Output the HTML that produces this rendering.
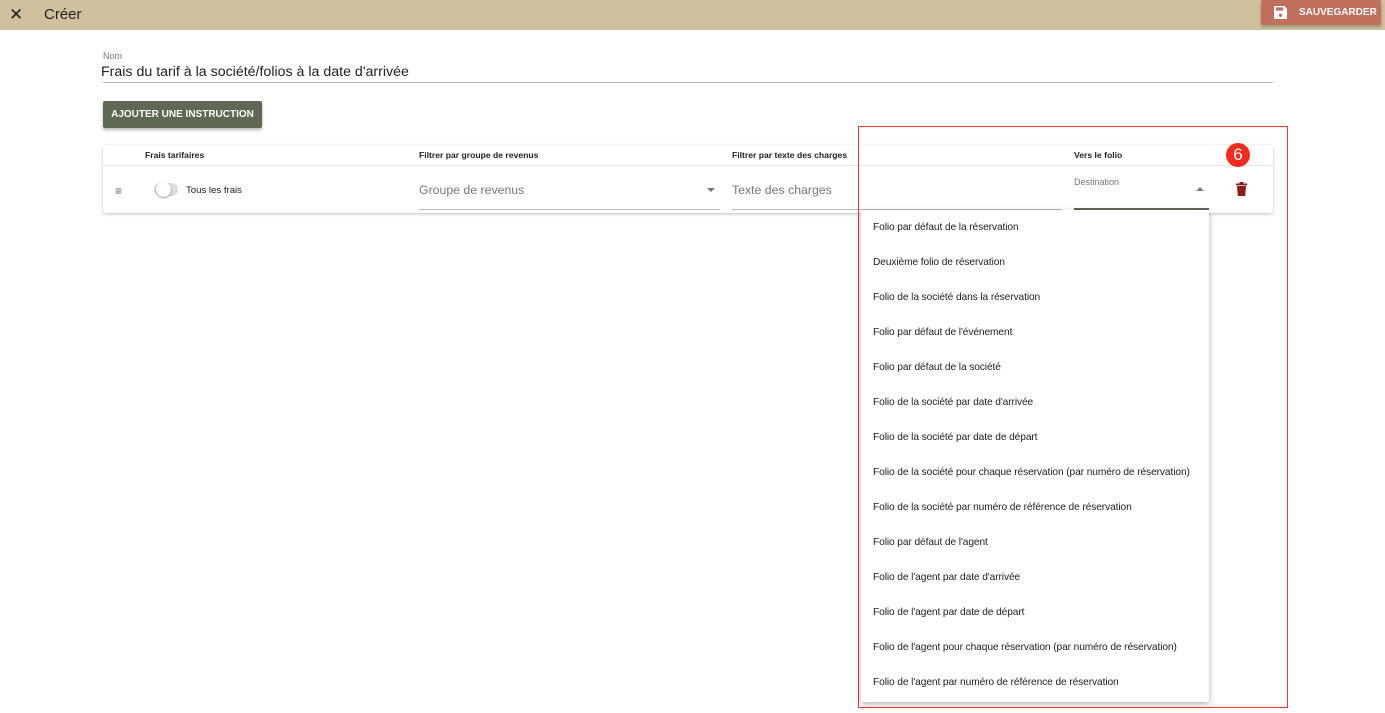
<!DOCTYPE html>
<html><head><meta charset="utf-8"><style>
*{box-sizing:border-box;margin:0;padding:0}
body{width:1385px;height:713px;background:#fff;font-family:"Liberation Sans",sans-serif;position:relative;overflow:hidden;color:#222}
.abs{position:absolute}
.top{left:0;top:0;width:1385px;height:30px;background:#cfc09f}
.save{left:1261px;top:0;width:120px;height:25px;background:#c0705a;border-radius:2px;box-shadow:0 2px 3px rgba(0,0,0,.25);color:#fff;font-size:10px;font-weight:bold;line-height:25px}
.card{left:103px;top:145px;width:1170px;height:68px;background:#fff;box-shadow:0 1px 3px rgba(0,0,0,.25);border-radius:3px}
.th{font-size:8.6px;font-weight:bold;color:#222}
.menu{left:861px;top:210px;width:348px;height:492px;background:#fff;box-shadow:0 2px 6px rgba(0,0,0,.3)}
.mi{position:absolute;left:12px;font-size:10.2px;color:#222;letter-spacing:-0.1px}
</style></head><body>
<div class="abs top"></div>
<div class="abs" style="left:9px;top:5px;font-size:17px;color:#222">✕</div>
<div class="abs" style="left:44px;top:6px;font-size:15px;color:#222">Créer</div>
<div class="abs save"><svg style="position:absolute;left:13px;top:6px" width="13" height="13" viewBox="0 0 14 14"><path d="M0 1a1 1 0 0 1 1-1h10l3 3v10a1 1 0 0 1-1 1H1a1 1 0 0 1-1-1z" fill="#fff"/><rect x="2" y="1.5" width="8" height="3.5" fill="#c0705a"/><circle cx="7" cy="10" r="1.8" fill="#c0705a"/></svg><span style="position:absolute;left:38px">SAUVEGARDER</span></div>

<div class="abs" style="left:103px;top:51px;font-size:9px;color:#777">Nom</div>
<div class="abs" style="left:101px;top:64px;font-size:14.2px;color:#222">Frais du tarif à la société/folios à la date d'arrivée</div>
<div class="abs" style="left:103px;top:82px;width:1170px;height:1px;background:#bbb"></div>

<div class="abs" style="left:103px;top:101px;width:159px;height:27px;background:#5f6853;border-radius:2px;box-shadow:0 2px 3px rgba(0,0,0,.3);color:#fff;font-size:10px;font-weight:bold;line-height:27px;text-align:center">AJOUTER UNE INSTRUCTION</div>

<div class="abs card">
 <div class="abs" style="left:0;top:20px;width:1170px;height:1px;background:#e3e3e3"></div>
 <div class="abs th" style="left:42px;top:5px">Frais tarifaires</div>
 <div class="abs th" style="left:316px;top:5px">Filtrer par groupe de revenus</div>
 <div class="abs th" style="left:629px;top:5px">Filtrer par texte des charges</div>
 <div class="abs th" style="left:971px;top:5px">Vers le folio</div>
 <div class="abs" style="left:12px;top:39px;font-size:12px;color:#666">≡</div>
 <div class="abs" style="left:51px;top:38px;width:24px;height:13px;border-radius:7px;background:#ddd"></div>
 <div class="abs" style="left:53px;top:37px;width:15px;height:15px;border-radius:50%;background:#fff;box-shadow:0 1px 2px rgba(0,0,0,.4)"></div>
 <div class="abs" style="left:83px;top:40px;font-size:9.6px;color:#222">Tous les frais</div>
 <div class="abs" style="left:316px;top:38px;font-size:12.3px;color:#777">Groupe de revenus</div>
 <div class="abs" style="left:604px;top:43px;width:0;height:0;border-left:4px solid transparent;border-right:4px solid transparent;border-top:4px solid #777"></div>
 <div class="abs" style="left:316px;top:64px;width:301px;height:1px;background:#bbb"></div>
 <div class="abs" style="left:629px;top:38px;font-size:12.3px;color:#777">Texte des charges</div>
 <div class="abs" style="left:629px;top:64px;width:330px;height:1px;background:#bbb"></div>
 <div class="abs" style="left:971px;top:32px;font-size:9px;color:#777">Destination</div>
 <div class="abs" style="left:1093px;top:42px;width:0;height:0;border-left:4px solid transparent;border-right:4px solid transparent;border-bottom:4px solid #777"></div>
 <div class="abs" style="left:971px;top:63px;width:135px;height:2px;background:#5f6853"></div>
 <svg class="abs" style="left:1133px;top:37px" width="11" height="14" viewBox="0 0 11 14"><rect x="0" y="1.5" width="11" height="1.8" fill="#8b1a1a"/><rect x="3.5" y="0" width="4" height="2" fill="#8b1a1a"/><path d="M1 4h9l-.8 10H1.8z" fill="#8b1a1a"/></svg>
</div>

<div class="abs" style="left:858px;top:126px;width:430px;height:582px;border:1px solid #e33"></div>
<div class="abs" style="left:1226px;top:143px;width:24px;height:24px;border-radius:50%;background:#f52a1e;color:#fff;font-size:17px;line-height:24px;text-align:center">6</div>

<div class="abs menu">
 <div class="mi" style="top:12px">Folio par défaut de la réservation</div>
 <div class="mi" style="top:47px">Deuxième folio de réservation</div>
 <div class="mi" style="top:82px">Folio de la société dans la réservation</div>
 <div class="mi" style="top:117px">Folio par défaut de l'événement</div>
 <div class="mi" style="top:152px">Folio par défaut de la société</div>
 <div class="mi" style="top:187px">Folio de la société par date d'arrivée</div>
 <div class="mi" style="top:222px">Folio de la société par date de départ</div>
 <div class="mi" style="top:257px">Folio de la société pour chaque réservation (par numéro de réservation)</div>
 <div class="mi" style="top:292px">Folio de la société par numéro de référence de réservation</div>
 <div class="mi" style="top:327px">Folio par défaut de l'agent</div>
 <div class="mi" style="top:362px">Folio de l'agent par date d'arrivée</div>
 <div class="mi" style="top:397px">Folio de l'agent par date de départ</div>
 <div class="mi" style="top:432px">Folio de l'agent pour chaque réservation (par numéro de réservation)</div>
 <div class="mi" style="top:467px">Folio de l'agent par numéro de référence de réservation</div>
</div>
</body></html>
